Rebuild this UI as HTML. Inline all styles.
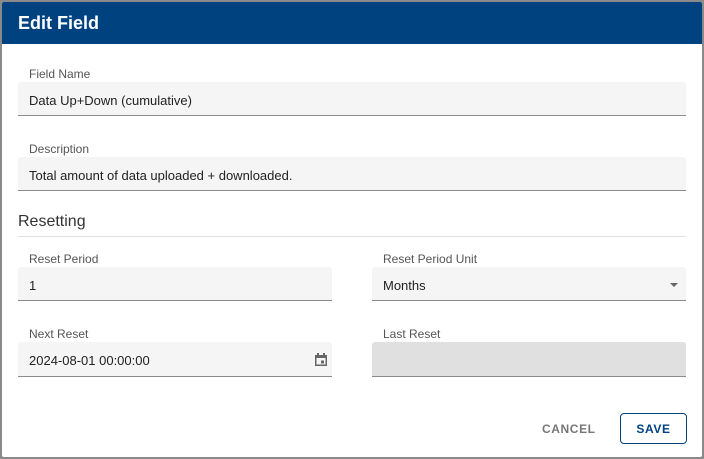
<!DOCTYPE html>
<html><head><style>
body{margin:0;width:704px;height:459px;background:#8a8a8a;font-family:"Liberation Sans",sans-serif;position:relative;overflow:hidden}
.dlg{position:absolute;left:2px;top:2px;width:700px;height:455px;background:#fff;border-radius:2px;overflow:hidden}
.hd{position:absolute;left:0;top:0;width:700px;height:42px;background:#00427f;color:#fff;font-weight:bold;font-size:18px;line-height:42px;padding-left:16px;box-sizing:border-box}
.lbl{position:absolute;font-size:12px;color:#555}
.in{position:absolute;background:#f5f5f5;border-bottom:1px solid #8a8a8a;font-size:13px;color:#222;box-sizing:border-box;padding-left:11px;border-radius:3px 3px 0 0}
</style></head><body>
<div class="dlg">
<div class="hd">Edit Field</div>
<div class="lbl" style="left:27px;top:65px">Field Name</div>
<div class="in" style="left:16px;top:80px;width:668px;height:34px;line-height:37px">Data Up+Down (cumulative)</div>
<div class="lbl" style="left:27px;top:140px">Description</div>
<div class="in" style="left:16px;top:155px;width:668px;height:34px;line-height:37px">Total amount of data uploaded + downloaded.</div>
<div style="position:absolute;left:16px;top:211px;font-size:16px;color:#333">Resetting</div>
<div style="position:absolute;left:16px;top:234px;width:668px;height:1px;background:#e0e0e0"></div>
<div class="lbl" style="left:27px;top:250px">Reset Period</div>
<div class="in" style="left:16px;top:265px;width:314px;height:34px;line-height:37px">1</div>
<div class="lbl" style="left:381px;top:250px">Reset Period Unit</div>
<div class="in" style="left:370px;top:265px;width:314px;height:34px;line-height:37px">Months<span style="position:absolute;right:8px;top:16px;border-left:4px solid transparent;border-right:4px solid transparent;border-top:4px solid #666"></span></div>
<div class="lbl" style="left:27px;top:325px">Next Reset</div>
<div class="in" style="left:16px;top:340px;width:314px;height:35px;line-height:37px">2024-08-01 00:00:00
<svg style="position:absolute;right:4px;top:10px" width="14" height="15" viewBox="0 0 14 15"><path d="M1 3h12v11H1z" fill="#666"/><rect x="2.5" y="6" width="9" height="6.5" fill="#f5f5f5"/><rect x="7" y="8.5" width="3" height="3" fill="#666"/><rect x="3" y="1" width="2" height="3" fill="#666"/><rect x="9" y="1" width="2" height="3" fill="#666"/></svg></div>
<div class="lbl" style="left:381px;top:325px">Last Reset</div>
<div class="in" style="left:370px;top:340px;width:314px;height:35px;background:#e0e0e0"></div>
<div style="position:absolute;left:540px;top:420px;font-size:12px;font-weight:bold;color:#777;letter-spacing:.6px">CANCEL</div>
<div style="position:absolute;left:618px;top:411px;width:67px;height:31px;border:1px solid #00427f;border-radius:4px;box-sizing:border-box;text-align:center;line-height:31px;font-size:12px;font-weight:bold;color:#00427f;letter-spacing:.6px">SAVE</div>
</div>
</body></html>
